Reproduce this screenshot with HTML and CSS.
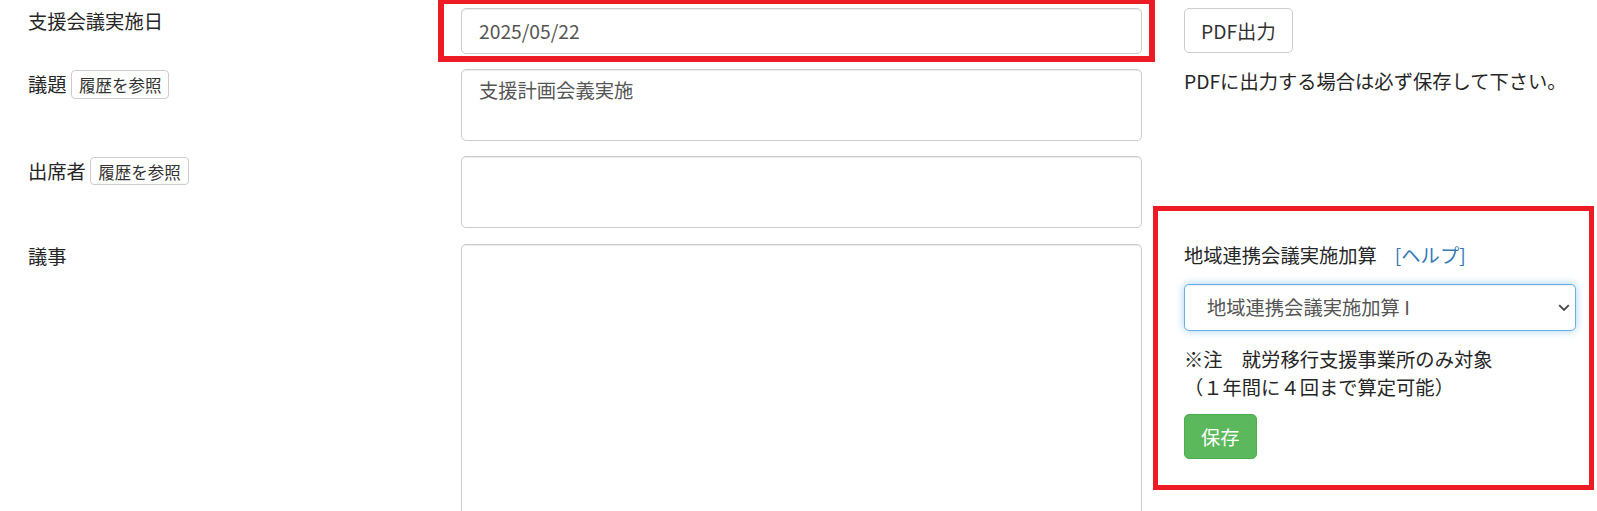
FILE: index.html
```html
<!DOCTYPE html>
<html lang="ja">
<head>
<meta charset="utf-8">
<link rel="stylesheet" href="styles.css">
</head>
<body>
<div class="page">
  <div class="form">
    <div class="label">支援会議実施日</div>
    <input class="control input" type="text" value="2025/05/22">

    <div class="label">議題 <button class="btn btn-xs">履歴を参照</button></div>
    <textarea class="control area">支援計画会義実施</textarea>

    <div class="label">出席者 <button class="btn btn-xs">履歴を参照</button></div>
    <textarea class="control area area-tall"></textarea>

    <div class="label last">議事</div>
    <textarea class="control area big last"></textarea>
  </div>

  <div class="side">
    <button class="btn btn-default">PDF出力</button>
    <p class="hint">PDFに出力する場合は必ず保存して下さい。</p>

    <div class="addon">
      <div class="addon-title">地域連携会議実施加算<a class="help" href="#">[ヘルプ]</a></div>
      <div class="select-wrap">
        <select class="control select">
          <option>地域連携会議実施加算 I</option>
        </select>
        <svg class="chev" width="12" height="8" viewBox="0 0 12 8"><polyline points="1.2,1.2 6,6 10.8,1.2" fill="none" stroke="#444" stroke-width="1.8"/></svg>
      </div>
      <p class="note">※注　就労移行支援事業所のみ対象<br>（１年間に４回まで算定可能）</p>
      <button class="btn btn-success">保存</button>
    </div>
  </div>

  <div class="mark mark-date"></div>
  <div class="mark mark-side"></div>
</div>
</body>
</html>
```

FILE: styles.css
```css
* { box-sizing: border-box; }
html, body { margin: 0; padding: 0; background: #fff; }
body {
  font-family: "Noto Sans CJK JP", "Noto Sans", sans-serif;
  font-size: 19.3px;
  line-height: 25.5px;
  color: #262626;
}
.page {
  position: relative;
  display: flex;
  align-items: flex-start;
  padding: 8px 0 0 28px;
  height: 511px;
  overflow: hidden;
}
.form {
  display: grid;
  grid-template-columns: 433px 681px;
  row-gap: 15.3px;
  align-items: start;
}
.label {
  padding-top: 1px;
  white-space: nowrap;
}
.last { margin-top: -1px; }
.control {
  font-family: inherit;
  font-size: 19.3px;
  line-height: 25.5px;
  color: #555;
  background: #fff;
  border: 1px solid #ccc;
  border-radius: 5px;
  box-shadow: inset 0 1px 1px rgba(0,0,0,.075);
  padding: 8px 17px;
  width: 100%;
  margin: 0;
  display: block;
  outline: none;
}
.input { height: 46px; }
.area { height: 71.5px; resize: none; overflow: hidden; }
.area-tall { height: 72.3px; }
.area.big { height: 320px; }

.btn {
  font-family: inherit;
  display: inline-block;
  border: 1px solid #ccc;
  background: #fff;
  color: #333;
  margin: 0;
  cursor: pointer;
  vertical-align: baseline;
}
.btn-xs {
  font-size: 16.5px;
  line-height: 24px;
  height: 28.3px;
  padding: 1px 7px 0;
  border-radius: 4px;
}
.btn-default {
  font-size: 19.3px;
  line-height: 26px;
  height: 45px;
  padding: 8px 16px;
  border-radius: 5px;
}
.btn-success {
  font-size: 19.3px;
  line-height: 26px;
  height: 45px;
  padding: 8px 16px;
  border-radius: 5px;
  background: #5cb85c;
  border-color: #4cae4c;
  color: #fff;
}

.side {
  margin-left: 42px;
  width: 392px;
  display: flex;
  flex-direction: column;
  align-items: flex-start;
}
.hint { margin: 15.5px 0 0; white-space: nowrap; }
.addon {
  margin-top: 149px;
  width: 100%;
  display: flex;
  flex-direction: column;
  align-items: flex-start;
}
.addon-title { white-space: nowrap; }
.help { color: #337ab7; text-decoration: none; margin-left: 18px; }
.select-wrap {
  position: relative;
  width: 100%;
  margin-top: 15.4px;
}
.select {
  -webkit-appearance: none;
  appearance: none;
  height: 47px;
  padding: 8px 16px 8px 22px;
  border-color: #66afe9;
  box-shadow: inset 0 1px 1px rgba(0,0,0,.075), 0 0 8px rgba(102,175,233,.6);
}
.chev {
  position: absolute;
  right: 6px;
  top: 20px;
}
.note { margin: 15.4px 0 0; line-height: 27.5px; white-space: nowrap; }
.btn-success { margin-top: 12.9px; }

.mark {
  position: absolute;
  border: 6px solid #ed1c24;
  pointer-events: none;
}
.mark-date { left: 438px; top: -2px; width: 717px; height: 64px; }
.mark-side { left: 1153px; top: 206px; width: 441px; height: 284px; border-width: 5px; }
```
